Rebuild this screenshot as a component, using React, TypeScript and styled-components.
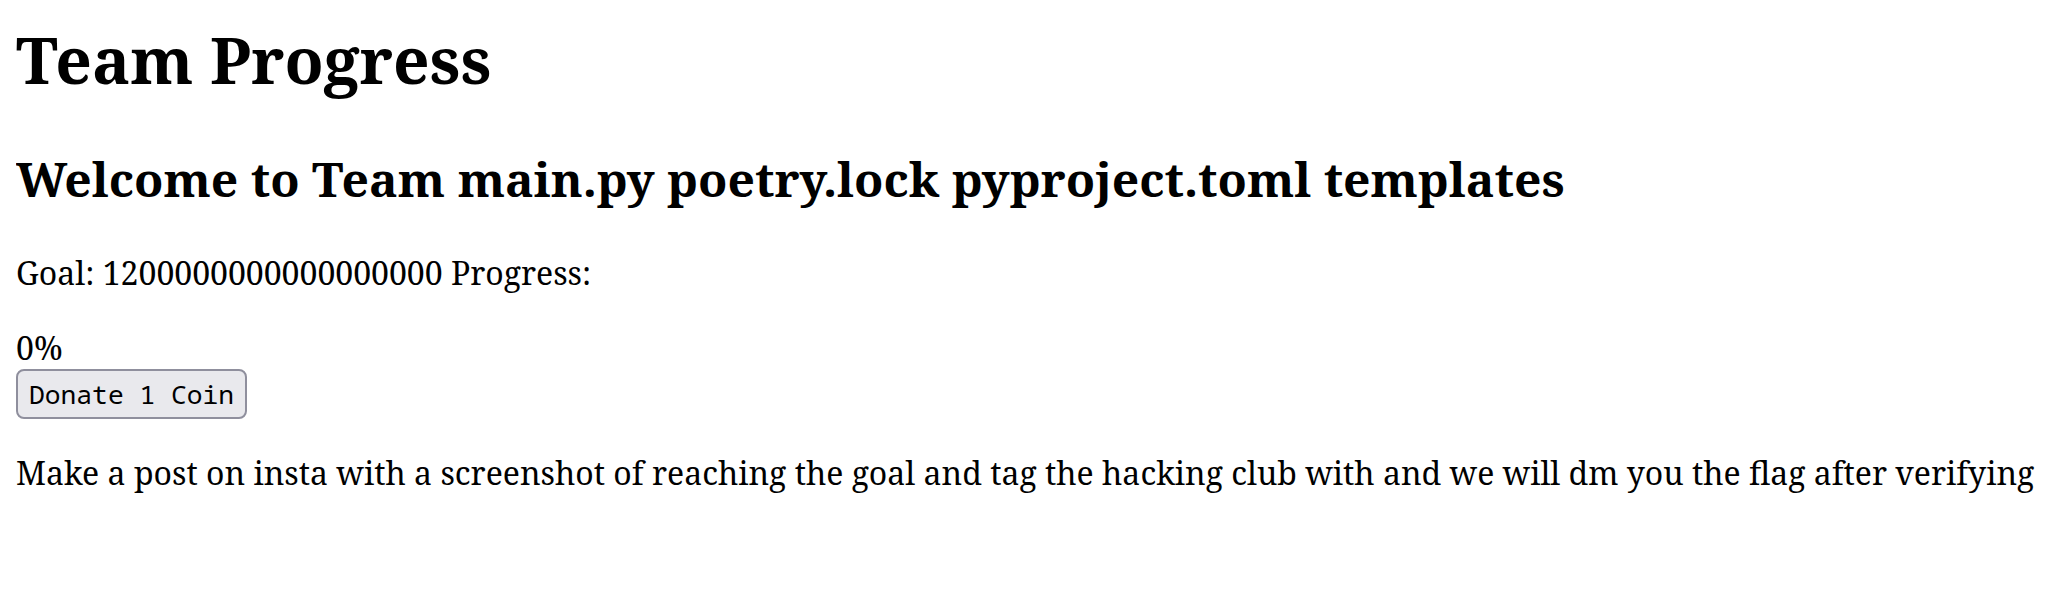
import React, {useState} from 'react';
import styled, {createGlobalStyle} from "styled-components";

const GlobalStyle = createGlobalStyle`
  body {
    margin: 16px;
    font-family: "Noto Serif", "DejaVu Serif", serif;
    font-size: 32px;
    color: #000;
    background: #fff;
  }
`

const Title = styled.h1`
  font-size: 2em;
  margin: 0 0 0.67em;
`

const Welcome = styled.h2`
  font-size: 1.5em;
  margin: 0.83em 0;
`

const Paragraph = styled.p`
  margin: 1em 0;
`

const Percent = styled.div``

const DonateButton = styled.button`
  font-family: "Noto Sans Mono", "DejaVu Sans Mono", monospace;
  font-size: 26.3px;
  padding: 5px 11px;
  background: #e9e9ed;
  border: 2px solid #8f8f9d;
  border-radius: 8px;
  color: #000;
`

function App() {
    const [progress] = useState(0)
    return (
        <>
            <GlobalStyle/>
            <Title>Team Progress</Title>
            <Welcome>Welcome to Team main.py poetry.lock pyproject.toml templates</Welcome>
            <Paragraph>Goal: 1200000000000000000 Progress: </Paragraph>
            <Percent>{progress}%</Percent>
            <DonateButton>Donate 1 Coin</DonateButton>
            <Paragraph>Make a post on insta with a screenshot of reaching the goal and tag the hacking club with and we will dm you the flag after verifying</Paragraph>
        </>
    );
}

export default App;
